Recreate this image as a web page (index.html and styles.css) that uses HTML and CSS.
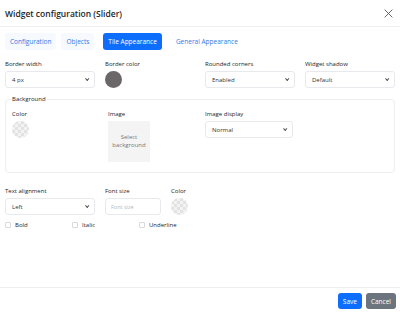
FILE: index.html
```html
<!DOCTYPE html>
<html>
<head>
  <link rel="stylesheet" href="styles.css">
</head>
<body>
  <div class="modal">
    <div class="modal-header">
      <h1 class="modal-title">Widget configuration (Slider)</h1>
      <button class="close-button">
        <svg width="9" height="9" viewBox="0 0 10 10" fill="none" stroke="#555" stroke-width="1">
          <path d="M1 1L9 9M9 1L1 9" stroke-linecap="round"/>
        </svg>
      </button>
    </div>

    <div class="modal-body">
      <div class="tabs">
        <button class="tab">Configuration</button>
        <button class="tab">Objects</button>
        <button class="tab active">Tile Appearance</button>
        <button class="tab plain">General Appearance</button>
      </div>

      <div class="row">
        <div class="field">
          <label>Border width</label>
          <div class="select">4 px<span class="caret"></span></div>
        </div>
        <div class="field">
          <label>Border color</label>
          <div class="swatch solid"></div>
        </div>
        <div class="field">
          <label>Rounded corners</label>
          <div class="select">Enabled<span class="caret"></span></div>
        </div>
        <div class="field">
          <label>Widget shadow</label>
          <div class="select">Default<span class="caret"></span></div>
        </div>
      </div>

      <fieldset class="group">
        <legend>Background</legend>
        <div class="group-row">
          <div class="field color-field">
            <label>Color</label>
            <div class="swatch checker"></div>
          </div>
          <div class="field image-field">
            <label>Image</label>
            <div class="image-box">Select<br>background</div>
          </div>
          <div class="field">
            <label>Image display</label>
            <div class="select wide">Normal<span class="caret"></span></div>
          </div>
        </div>
      </fieldset>

      <div class="row text-row">
        <div class="field">
          <label>Text alignment</label>
          <div class="select">Left<span class="caret"></span></div>
        </div>
        <div class="field small">
          <label>Font size</label>
          <div class="input placeholder">Font size</div>
        </div>
        <div class="field tiny">
          <label>Color</label>
          <div class="swatch checker"></div>
        </div>
      </div>

      <div class="checks">
        <label class="check"><span class="box"></span>Bold</label>
        <label class="check"><span class="box"></span>Italic</label>
        <label class="check"><span class="box"></span>Underline</label>
      </div>
    </div>

    <div class="modal-footer">
      <button class="btn primary">Save</button>
      <button class="btn secondary">Cancel</button>
    </div>
  </div>
</body>
</html>
```

FILE: styles.css
```css
* {
  margin: 0;
  padding: 0;
  box-sizing: border-box;
  font-family: 'Open Sans', 'Noto Sans', sans-serif;
}

body {
  width: 400px;
  height: 314px;
  background: #ffffff;
  color: #212529;
}

.modal {
  display: flex;
  flex-direction: column;
  height: 314px;
}

.modal-header {
  display: flex;
  align-items: center;
  justify-content: space-between;
  height: 27px;
  padding: 0 5px;
  border-bottom: 1px solid #eceef0;
}

.modal-title {
  font-size: 8.5px;
  font-weight: 600;
  color: #212529;
}

.close-button {
  background: transparent;
  border: none;
  display: flex;
  padding: 2px;
}

.modal-body {
  flex: 1;
  padding: 6px 5px 0;
}

/* Tabs */
.tabs {
  display: flex;
  gap: 5px;
  margin-bottom: 10px;
}

.tab {
  font-size: 6.5px;
  color: #2f7be6;
  background: #f6f9fd;
  border: none;
  border-radius: 3px;
  height: 17px;
  padding: 0 5px;
}

.tab.active {
  background: #0d6efd;
  color: #ffffff;
  margin-left: 4px;
}

.tab.plain {
  background: transparent;
  margin-left: 4px;
}

/* Fields */
.row {
  display: flex;
}

.field {
  display: flex;
  flex-direction: column;
  flex-shrink: 0;
  width: 100px;
}

.field label {
  font-size: 6px;
  font-weight: 500;
  color: #212529;
  height: 9px;
  margin-bottom: 2px;
}

.select {
  display: flex;
  align-items: center;
  justify-content: space-between;
  width: 90px;
  height: 17px;
  padding: 0 6px;
  border: 1px solid #e7e9ec;
  border-radius: 3px;
  font-size: 6px;
  color: #333;
}

.select.wide {
  width: 88px;
}

.caret {
  width: 3px;
  height: 3px;
  border-right: 1px solid #555;
  border-bottom: 1px solid #555;
  transform: rotate(45deg) translateY(-1px);
}

.swatch {
  width: 17px;
  height: 17px;
  border-radius: 50%;
}

.swatch.solid {
  background: #6b6668;
}

.swatch.checker {
  background-color: #f3f3f3;
  background-image:
    linear-gradient(45deg, #e2e2e2 25%, transparent 25%, transparent 75%, #e2e2e2 75%),
    linear-gradient(45deg, #e2e2e2 25%, transparent 25%, transparent 75%, #e2e2e2 75%);
  background-size: 6px 6px;
  background-position: 0 0, 3px 3px;
}

/* Background group */
.group {
  margin-top: 7px;
  border: 1px solid #eceef0;
  border-radius: 4px;
  padding: 7px 6px 8px;
  height: 78px;
}

.group legend {
  font-size: 6px;
  font-weight: 500;
  padding: 0 1px;
  margin-left: -1px;
}

.group-row {
  display: flex;
}

.group-row .color-field {
  width: 96px;
}

.group-row .image-field {
  width: 97px;
}

.image-box {
  width: 42px;
  height: 41px;
  background: #f4f4f4;
  display: flex;
  align-items: center;
  justify-content: center;
  text-align: center;
  font-size: 6px;
  color: #777;
  line-height: 1.3;
}

/* Text row */
.text-row {
  margin-top: 14px;
}

.field.small {
  width: 66px;
}

.field.tiny {
  width: 20px;
}

.input {
  width: 56px;
  height: 17px;
  border: 1px solid #e7e9ec;
  border-radius: 3px;
  font-size: 5.5px;
  padding: 0 5px;
  display: flex;
  align-items: center;
}

.placeholder {
  color: #b5b8bc;
}

.checks {
  display: flex;
  margin-top: 6px;
}

.check {
  display: flex;
  align-items: center;
  gap: 4px;
  font-size: 6px;
  font-weight: 500;
  width: 67px;
}

.box {
  width: 6px;
  height: 6px;
  border: 1px solid #d7dadd;
  border-radius: 1px;
}

/* Footer */
.modal-footer {
  display: flex;
  justify-content: flex-end;
  align-items: center;
  gap: 4px;
  height: 27px;
  padding: 0 4px;
  border-top: 1px solid #eceef0;
}

.btn {
  font-size: 6.5px;
  height: 16px;
  border: none;
  border-radius: 3px;
  color: #ffffff;
  padding: 0 5px;
}

.btn.primary {
  background: #0d6efd;
}

.btn.secondary {
  background: #6c757d;
}
```
